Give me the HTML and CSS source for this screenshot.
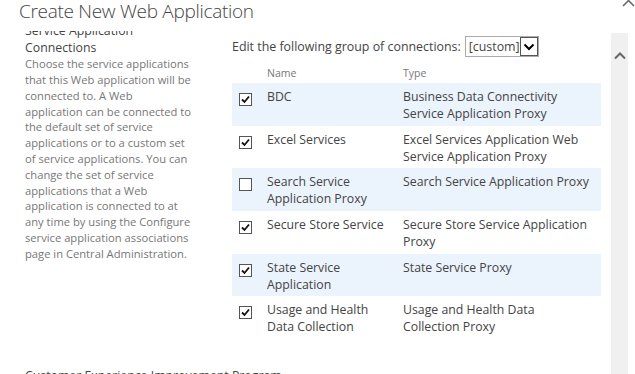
FILE: index.html
```html
<!DOCTYPE html>
<html lang="en">

<head>
  <meta charset="UTF-8">
  <meta name="viewport" content="width=device-width, initial-scale=1.0">
  <title>Create New Web Application</title>
  <link rel="stylesheet" href="styles.css">
</head>

<body>

  <div class="dialog">
    <div class="dlg-header">
      <h1 class="dlg-title">Create New Web Application</h1>
      <span class="dlg-close">
        <svg width="13" height="13" viewBox="0 0 13 13"><path d="M1 1 L12 12 M12 1 L1 12" stroke="#666" stroke-width="1.5" fill="none" /></svg>
      </span>
    </div>

    <div class="dlg-main">
      <div class="dlg-content">
        <div class="dlg-scroll">

          <div class="section">
            <div class="section-info">
              <h3 class="section-title">Service Application<br>Connections</h3>
              <p class="section-desc">
                Choose the service applications<br>
                that this Web application will be<br>
                connected to. A Web<br>
                application can be connected to<br>
                the default set of service<br>
                applications or to a custom set<br>
                of service applications. You can<br>
                change the set of service<br>
                applications that a Web<br>
                application is connected to at<br>
                any time by using the Configure<br>
                service application associations<br>
                page in Central Administration.
              </p>
            </div>

            <div class="section-body">
              <div class="group-select">
                <span>Edit the following group of connections:</span>
                <span class="select">
                  <span class="select-value">[custom]</span>
                  <span class="select-btn">
                    <svg width="12" height="8" viewBox="0 0 12 8"><path d="M1.5 1.5 L6 6 L10.5 1.5" stroke="#000" stroke-width="2" fill="none" /></svg>
                  </span>
                </span>
              </div>

              <table class="conn-table">
                <thead>
                  <tr>
                    <th class="col-check"></th>
                    <th class="col-name">Name</th>
                    <th class="col-type">Type</th>
                  </tr>
                </thead>
                <tbody>
                  <tr>
                    <td><span class="chk"><svg width="11" height="11" viewBox="0 0 11 11"><path d="M2 5.5 L4.5 8 L9 2.5" stroke="#111" stroke-width="1.8" fill="none" /></svg></span></td>
                    <td>BDC</td>
                    <td>Business Data Connectivity<br>Service Application Proxy</td>
                  </tr>
                  <tr>
                    <td><span class="chk"><svg width="11" height="11" viewBox="0 0 11 11"><path d="M2 5.5 L4.5 8 L9 2.5" stroke="#111" stroke-width="1.8" fill="none" /></svg></span></td>
                    <td>Excel Services</td>
                    <td>Excel Services Application Web<br>Service Application Proxy</td>
                  </tr>
                  <tr>
                    <td><span class="chk"></span></td>
                    <td>Search Service<br>Application Proxy</td>
                    <td>Search Service Application Proxy</td>
                  </tr>
                  <tr>
                    <td><span class="chk"><svg width="11" height="11" viewBox="0 0 11 11"><path d="M2 5.5 L4.5 8 L9 2.5" stroke="#111" stroke-width="1.8" fill="none" /></svg></span></td>
                    <td>Secure Store Service</td>
                    <td>Secure Store Service Application<br>Proxy</td>
                  </tr>
                  <tr>
                    <td><span class="chk"><svg width="11" height="11" viewBox="0 0 11 11"><path d="M2 5.5 L4.5 8 L9 2.5" stroke="#111" stroke-width="1.8" fill="none" /></svg></span></td>
                    <td>State Service<br>Application</td>
                    <td>State Service Proxy</td>
                  </tr>
                  <tr>
                    <td><span class="chk"><svg width="11" height="11" viewBox="0 0 11 11"><path d="M2 5.5 L4.5 8 L9 2.5" stroke="#111" stroke-width="1.8" fill="none" /></svg></span></td>
                    <td>Usage and Health<br>Data Collection</td>
                    <td>Usage and Health Data<br>Collection Proxy</td>
                  </tr>
                </tbody>
              </table>
            </div>
          </div>

          <div class="section">
            <div class="section-info">
              <h3 class="section-title">Customer Experience Improvement Program</h3>
            </div>
          </div>

        </div>
      </div>

      <div class="scrollbar">
        <svg width="12" height="8" viewBox="0 0 12 8"><path d="M1 6.5 L6 1.5 L11 6.5" stroke="#666" stroke-width="2" fill="none" /></svg>
      </div>
    </div>
  </div>

</body>

</html>
```

FILE: styles.css
```css
body {
  margin: 0;
  font-family: "Open Sans", "Segoe UI", sans-serif;
  color: #444;
  background-color: #fff;
  overflow: hidden;
}

.dialog {
  width: 635px;
  height: 374px;
  display: flex;
  flex-direction: column;
}

/* title bar */
.dlg-header {
  position: relative;
  flex: none;
  height: 31px;
  padding-left: 19px;
}

.dlg-title {
  margin: 0;
  font-size: 19px;
  font-weight: 300;
  line-height: 22px;
  letter-spacing: -0.3px;
  color: #444;
}

.dlg-close {
  position: absolute;
  left: 622px;
  top: -6px;
  width: 13px;
  height: 13px;
}

.dlg-close svg {
  display: block;
}

/* scrolling body */
.dlg-main {
  flex: 1;
  display: flex;
  min-height: 0;
}

.dlg-content {
  flex: 1;
  overflow: hidden;
}

.dlg-scroll {
  margin-top: -8.8px;
}

.section {
  display: flex;
  padding-left: 25px;
  margin-bottom: 28px;
}

.section-info {
  flex: none;
  width: 207px;
}

.section-title {
  margin: 0;
  font-size: 12.3px;
  font-weight: 400;
  line-height: 17px;
  color: #444;
  white-space: nowrap;
}

.section-desc {
  margin: 0;
  font-size: 11.2px;
  line-height: 15.8px;
  color: #777;
  white-space: nowrap;
}

.section-body {
  width: 369px;
}

.group-select {
  display: flex;
  align-items: center;
  gap: 4px;
  height: 21px;
  margin-top: 14px;
  font-size: 12.4px;
}

.select {
  display: flex;
  align-items: stretch;
  box-sizing: border-box;
  width: 74px;
  height: 21px;
  border: 1px solid #ababab;
  background-color: #fff;
}

.select-value {
  flex: 1;
  padding-left: 3px;
  line-height: 19px;
}

.select-btn {
  display: flex;
  align-items: center;
  justify-content: center;
  width: 21px;
  border: 1px solid #555;
}

/* connections table */
.conn-table {
  margin-top: 7px;
  border-collapse: collapse;
  font-size: 12.3px;
  line-height: 17px;
}

.conn-table th {
  height: 19px;
  padding: 0;
  font-size: 10.5px;
  font-weight: 400;
  color: #777;
  text-align: left;
}

.col-check {
  width: 35px;
}

.col-name {
  width: 136px;
}

.col-type {
  width: 198px;
}

.conn-table td {
  height: 42.6px;
  box-sizing: border-box;
  padding: 5px 0 0 0;
  vertical-align: top;
  white-space: nowrap;
}

.conn-table tbody tr:nth-child(odd) {
  background-color: #ebf3fc;
}

.chk {
  display: flex;
  align-items: center;
  justify-content: center;
  box-sizing: border-box;
  width: 13px;
  height: 13px;
  margin: 5px 0 0 7px;
  border: 1px solid #555;
  background-color: #fff;
}

/* fake scrollbar */
.scrollbar {
  flex: none;
  display: flex;
  justify-content: center;
  box-sizing: border-box;
  width: 17px;
  margin: 2px 7px 0 0;
  padding-top: 19px;
  background-color: #f0f0f0;
}
```
